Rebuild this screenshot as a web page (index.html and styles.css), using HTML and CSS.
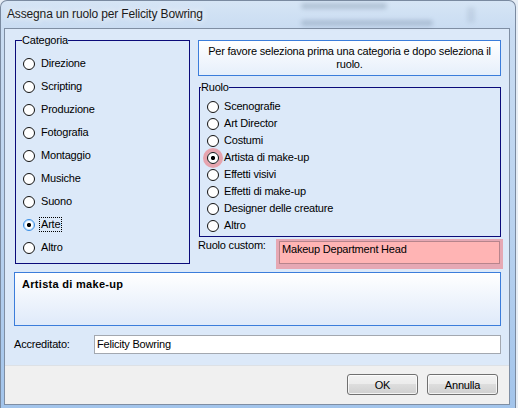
FILE: index.html
```html
<!DOCTYPE html>
<html lang="it">
<head>
<meta charset="utf-8">
<title>Assegna un ruolo</title>
<link rel="stylesheet" href="styles.css">
</head>
<body>
<div class="window">
  <div class="glass-blur blur1"></div>
  <div class="glass-blur blur2"></div>
  <div class="glass-blur blur3"></div>
  <div class="titlebar">Assegna un ruolo per Felicity Bowring</div>
  <div class="client">
    <div class="main">
      <div class="top">
        <fieldset class="group cat">
          <legend>Categoria</legend>
          <div class="cat-row"><span class="radio"></span><span class="cat-label">Direzione</span></div>
          <div class="cat-row"><span class="radio"></span><span class="cat-label">Scripting</span></div>
          <div class="cat-row"><span class="radio"></span><span class="cat-label">Produzione</span></div>
          <div class="cat-row"><span class="radio"></span><span class="cat-label">Fotografia</span></div>
          <div class="cat-row"><span class="radio"></span><span class="cat-label">Montaggio</span></div>
          <div class="cat-row"><span class="radio"></span><span class="cat-label">Musiche</span></div>
          <div class="cat-row"><span class="radio"></span><span class="cat-label">Suono</span></div>
          <div class="cat-row"><span class="radio on hot"></span><span class="cat-label focus">Arte</span></div>
          <div class="cat-row"><span class="radio"></span><span class="cat-label">Altro</span></div>
        </fieldset>
        <div class="right">
          <div class="info">Per favore seleziona prima una categoria e dopo seleziona il ruolo.</div>
          <fieldset class="group ruolo">
            <legend>Ruolo</legend>
            <div class="role-row"><span class="radio"></span><span>Scenografie</span></div>
            <div class="role-row"><span class="radio"></span><span>Art Director</span></div>
            <div class="role-row"><span class="radio"></span><span>Costumi</span></div>
            <div class="role-row"><span class="radio on halo"></span><span>Artista di make-up</span></div>
            <div class="role-row"><span class="radio"></span><span>Effetti visivi</span></div>
            <div class="role-row"><span class="radio"></span><span>Effetti di make-up</span></div>
            <div class="role-row"><span class="radio"></span><span>Designer delle creature</span></div>
            <div class="role-row"><span class="radio"></span><span>Altro</span></div>
          </fieldset>
          <div class="custom-row">
            <span class="custom-label">Ruolo custom:</span>
            <div class="custom-halo"><div class="custom-input">Makeup Department Head</div></div>
          </div>
        </div>
      </div>
      <div class="desc">Artista di make-up</div>
      <div class="cred-row">
        <span class="cred-label">Accreditato:</span>
        <div class="textbox">Felicity Bowring</div>
      </div>
    </div>
    <div class="footer">
      <button class="btn">OK</button>
      <button class="btn">Annulla</button>
    </div>
  </div>
</div>
</body>
</html>
```

FILE: styles.css
```css
* { box-sizing: border-box; }

html, body {
  margin: 0;
  padding: 0;
}

body {
  width: 518px;
  height: 408px;
  overflow: hidden;
  background: #e6edf5;
  font-family: "Liberation Sans", Arial, sans-serif;
  font-size: 11px;
  letter-spacing: -0.2px;
  color: #000;
}

.window {
  position: relative;
  width: 516px;
  height: 412px;
  border: 1px solid #7a8aa0;
  border-bottom: none;
  border-radius: 7px 7px 0 0;
  background: linear-gradient(180deg, #d6e5f5 0px, #c9dcf2 28px, #b9d2ef 55%, #a2c4eb 100%);
  overflow: hidden;
}

.glass-blur {
  position: absolute;
  background: rgba(60, 80, 110, 0.22);
  filter: blur(2px);
  border-radius: 3px;
}
.blur1 { left: 300px; top: 2px; width: 86px; height: 6px; }
.blur2 { left: 300px; top: 19px; width: 132px; height: 6px; }
.blur3 { left: 466px; top: 6px; width: 8px; height: 16px; background: rgba(60, 80, 110, 0.1); }

.titlebar {
  position: relative;
  height: 27px;
  padding: 5px 0 0 6px;
  font-size: 12px;
  line-height: 16px;
  letter-spacing: -0.15px;
  color: #1b1b1b;
  text-shadow: 0 0 6px rgba(255, 255, 255, 0.9), 0 0 10px rgba(255, 255, 255, 0.7);
}

.client {
  margin-left: 3px;
  width: 506px;
  height: 377px;
  border: 1px solid #7f8ea3;
  background: #dce9f9;
  display: flex;
  flex-direction: column;
}

.main {
  flex: 1;
  padding: 5px 8px 0 9px;
}

.top {
  display: flex;
  align-items: flex-start;
  gap: 8px;
}

.group {
  margin: 0;
  border: 1px solid #0b0b7a;
  min-width: 0;
}

.group legend {
  padding: 0;
  line-height: 13px;
}

.cat {
  margin-left: 1px;
  width: 175px;
  padding: 5px 0 4px 7px;
}
.cat legend { margin-left: -1px; }

.cat-row {
  height: 23px;
  display: flex;
  align-items: center;
}

.cat-label {
  margin-left: 4px;
  padding: 0 1px;
  line-height: 13px;
  border: 1px dotted transparent;
}
.cat-label.focus { border-color: #000; }

.radio {
  flex: none;
  width: 12px;
  height: 12px;
  border: 1px solid #111;
  border-radius: 50%;
  background: #fff;
}
.radio.on {
  background: radial-gradient(circle, #000 0 1.8px, #fff 2.4px);
}
.radio.hot {
  border-color: #3a8ee4;
  box-shadow: inset 0 0 0 1px #b8dafc;
}
.radio.halo {
  box-shadow: 0 0 0 4px #e6a4ae;
}

.right {
  width: 303px;
  padding-top: 6px;
}

.info {
  height: 36px;
  border: 1px solid #3b7ddb;
  background: linear-gradient(180deg, #ffffff 0%, #e6effb 100%);
  display: flex;
  align-items: center;
  justify-content: center;
  text-align: center;
  line-height: 13px;
  padding: 0 4px;
}

.ruolo {
  margin: 5px 0 0 1px;
  padding: 4px 0 2px 7px;
}
.ruolo legend { margin-left: -6px; }

.role-row {
  height: 17px;
  display: flex;
  align-items: center;
  gap: 5px;
  line-height: 13px;
}

.custom-row {
  margin-top: 2px;
  display: flex;
  align-items: flex-start;
  line-height: 13px;
}

.custom-label {
  width: 78px;
  flex: none;
}

.custom-halo {
  flex: 1;
  margin-right: -2px;
  padding: 2px 3px 5px 3px;
  background: #e6a8b4;
}

.custom-input {
  height: 23px;
  border: 1px solid #b7848c;
  background: #ffb4b4;
  padding: 1px 2px 0;
  line-height: 13px;
}

.desc {
  margin-top: 3px;
  height: 54px;
  border: 1px solid #3b7ddb;
  background: linear-gradient(180deg, #ffffff 0%, #dfeafa 100%);
  padding: 5px 7px;
  font-weight: bold;
  letter-spacing: 0.3px;
  line-height: 13px;
}

.cred-row {
  margin-top: 9px;
  display: flex;
  align-items: center;
  line-height: 13px;
}

.cred-label {
  width: 80px;
  flex: none;
}

.textbox {
  flex: 1;
  height: 19px;
  border: 1px solid #a3a8b0;
  background: #fff;
  padding: 2px 2px;
}

.footer {
  height: 39px;
  border-top: 1px solid #dde1e6;
  background: #f0f0f0;
  padding: 8px 11px 0 0;
  display: flex;
  justify-content: flex-end;
  align-items: flex-start;
  gap: 9px;
}

.btn {
  width: 71px;
  height: 21px;
  margin: 0;
  padding: 0;
  border: 1px solid #707070;
  border-radius: 3px;
  background: linear-gradient(180deg, #f2f2f2 0%, #ebebeb 50%, #dddddd 50%, #cfcfcf 100%);
  box-shadow: inset 0 0 0 1px rgba(255, 255, 255, 0.75);
  font-family: "Liberation Sans", Arial, sans-serif;
  font-size: 11px;
  letter-spacing: -0.2px;
  color: #000;
}
```
